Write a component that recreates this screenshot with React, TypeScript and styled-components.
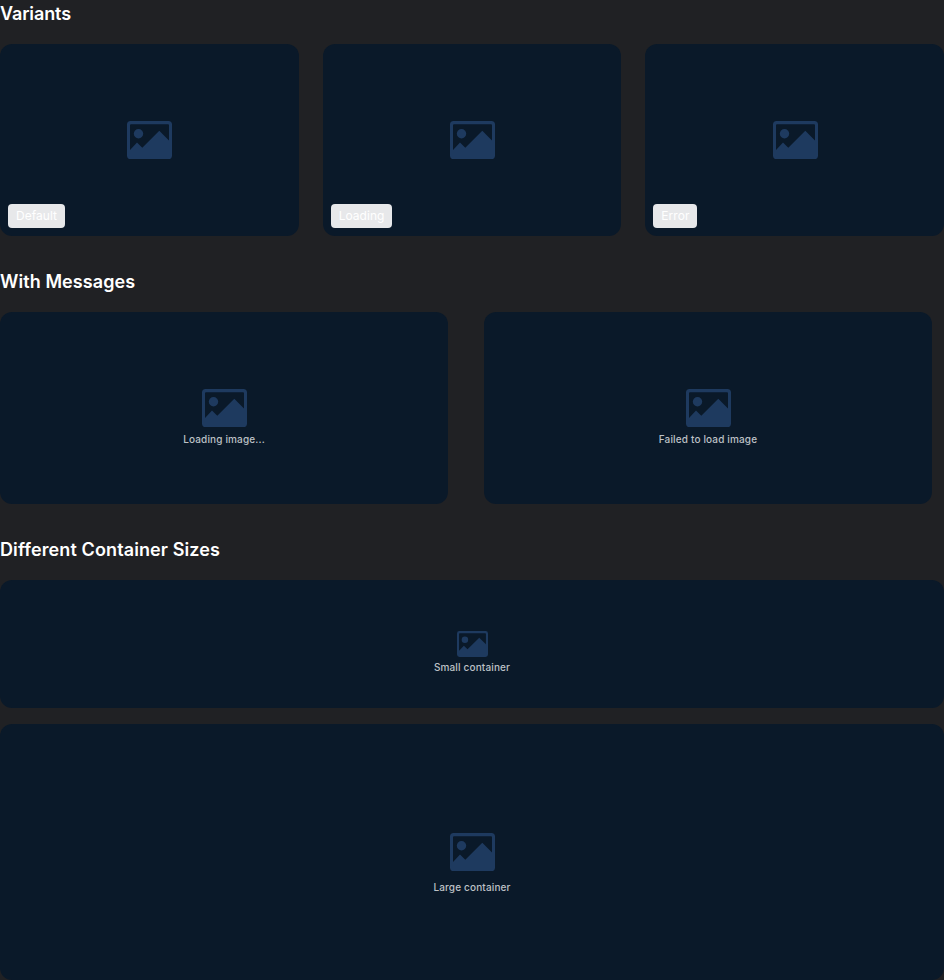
import React from "react";
import styled, { createGlobalStyle } from "styled-components";

const GlobalStyle = createGlobalStyle`
  *, *::before, *::after { box-sizing: border-box; }
  body {
    margin: 0;
    background: #202124;
    color: #fff;
    font-family: Inter, "Liberation Sans", sans-serif;
  }
`;

const Page = styled.main`
  display: flex;
  flex-direction: column;
  gap: 32px;
`;

const Section = styled.section`
  display: flex;
  flex-direction: column;
  gap: 16px;
`;

const Heading = styled.h3<{ $tracking: number }>`
  margin: 0;
  font-size: 18px;
  line-height: 28px;
  font-weight: 600;
  letter-spacing: ${(p) => p.$tracking}px;
`;

const Columns = styled.div<{ $count: number }>`
  display: grid;
  grid-template-columns: repeat(${(p) => p.$count}, minmax(0, 1fr));
  gap: 24px;
`;

const Card = styled.div<{ $height: number; $narrow?: boolean }>`
  position: relative;
  display: grid;
  place-items: center;
  width: 100%;
  max-width: ${(p) => (p.$narrow ? "448px" : "none")};
  height: ${(p) => p.$height}px;
  border-radius: 12px;
  background: #0a1929;
  overflow: hidden;
`;

const Picture = styled.svg<{ $small?: boolean }>`
  grid-area: 1 / 1;
  display: block;
  width: ${(p) => (p.$small ? 31 : 45)}px;
  height: ${(p) => (p.$small ? 26 : 38)}px;
  margin-left: 1px;
  color: #1e3a5f;
`;

const Message = styled.span<{ $drop: number }>`
  grid-area: 1 / 1;
  margin-top: ${(p) => p.$drop * 2 - 2}px;
  font-size: 10px;
  line-height: 16px;
  font-weight: 500;
  letter-spacing: 0.15px;
  color: #bdc1c6;
`;

const Badge = styled.span`
  position: absolute;
  left: 8px;
  bottom: 8px;
  padding: 4px 8px;
  border-radius: 4px;
  background: rgba(255, 255, 255, 0.9);
  color: #fff;
  font-size: 12px;
  line-height: 16px;
  letter-spacing: 0.04px;
`;

const PictureIcon = ({ small }: { small?: boolean }) => (
  <Picture $small={small} viewBox="0 0 45 38" preserveAspectRatio="none" fill="currentColor" aria-hidden="true">
    <path
      fillRule="evenodd"
      d="M3.6 0H41.4a3.6 3.6 0 0 1 3.6 3.6V34.4a3.6 3.6 0 0 1-3.6 3.6H3.6a3.6 3.6 0 0 1-3.6-3.6V3.6a3.6 3.6 0 0 1 3.6-3.6ZM4 3.2a1 1 0 0 0-1 1V29L10 21.5 15.3 26.8 32.3 9.7 42 19.5V4.2a1 1 0 0 0-1-1Z"
    />
    <circle cx="11.5" cy="12.8" r="4.7" />
  </Picture>
);

type PlaceholderProps = {
  height: number;
  label?: string;
  message?: string;
  drop?: number;
  small?: boolean;
  narrow?: boolean;
};

const Placeholder = ({ height, label, message, drop = 32, small, narrow }: PlaceholderProps) => (
  <Card $height={height} $narrow={narrow}>
    <PictureIcon small={small} />
    {message && <Message $drop={drop}>{message}</Message>}
    {label && <Badge>{label}</Badge>}
  </Card>
);

export default function App() {
  return (
    <>
      <GlobalStyle />
      <Page>
        <Section>
          <Heading $tracking={-0.12}>Variants</Heading>
          <Columns $count={3}>
            {["Default", "Loading", "Error"].map((label) => (
              <Placeholder key={label} height={192} label={label} />
            ))}
          </Columns>
        </Section>
        <Section>
          <Heading $tracking={0.08}>With Messages</Heading>
          <Columns $count={2}>
            <Placeholder height={192} message="Loading image..." narrow />
            <Placeholder height={192} message="Failed to load image" narrow />
          </Columns>
        </Section>
        <Section>
          <Heading $tracking={0.11}>Different Container Sizes</Heading>
          <Placeholder height={128} message="Small container" drop={24} small />
          <Placeholder height={256} message="Large container" drop={36} />
        </Section>
      </Page>
    </>
  );
}
